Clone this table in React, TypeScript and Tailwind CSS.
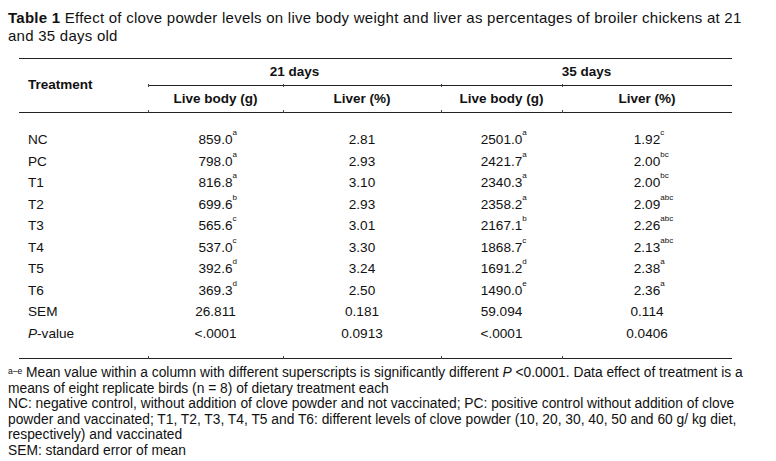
import React from "react";

type Row = { t: React.ReactNode; a: string; as?: string; b: string; c: string; cs?: string; d: string; ds?: string };

const rows: Row[] = [
  { t: "NC", a: "859.0", as: "a", b: "2.81", c: "2501.0", cs: "a", d: "1.92", ds: "c" },
  { t: "PC", a: "798.0", as: "a", b: "2.93", c: "2421.7", cs: "a", d: "2.00", ds: "bc" },
  { t: "T1", a: "816.8", as: "a", b: "3.10", c: "2340.3", cs: "a", d: "2.00", ds: "bc" },
  { t: "T2", a: "699.6", as: "b", b: "2.93", c: "2358.2", cs: "a", d: "2.09", ds: "abc" },
  { t: "T3", a: "565.6", as: "c", b: "3.01", c: "2167.1", cs: "b", d: "2.26", ds: "abc" },
  { t: "T4", a: "537.0", as: "c", b: "3.30", c: "1868.7", cs: "c", d: "2.13", ds: "abc" },
  { t: "T5", a: "392.6", as: "d", b: "3.24", c: "1691.2", cs: "d", d: "2.38", ds: "a" },
  { t: "T6", a: "369.3", as: "d", b: "2.50", c: "1490.0", cs: "e", d: "2.36", ds: "a" },
  { t: "SEM", a: "26.811", b: "0.181", c: "59.094", d: "0.114" },
  { t: <><i>P</i>-value</>, a: "<.0001", b: "0.0913", c: "<.0001", d: "0.0406" },
];

function Val({ v, s }: { v: string; s?: string }) {
  return (
    <span className="relative">
      {v}
      {s && <span className="absolute left-full top-[-3px] text-[8px] leading-none">{s}</span>}
    </span>
  );
}

// little column-border stubs where the rules meet
function Tick({ top }: { top?: boolean }) {
  return <span className={`absolute left-0 w-px h-[3px] bg-[#444] ${top ? "top-[-2px]" : "bottom-[-1px]"}`} />;
}

export default function App() {
  return (
    <div className="w-[776px] h-[461px] bg-white text-[#111] font-['Liberation_Sans',Arial,sans-serif] text-[13px] overflow-hidden">
      <div className="pl-2 pt-[9px] leading-[18px] text-[15px] tracking-[0.25px]">
        <div className="whitespace-nowrap"><b>Table 1</b> Effect of clove powder levels on live body weight and liver as percentages of broiler chickens at 21</div>
        <div className="whitespace-nowrap">and 35 days old</div>
      </div>

      <table className="ml-[19px] mt-[13px] w-[713px] table-fixed border-collapse border-t border-b border-[#222]">
        <colgroup>
          <col className="w-[129px]" />
          <col className="w-[135px]" />
          <col className="w-[158px]" />
          <col className="w-[121px]" />
          <col className="w-[170px]" />
        </colgroup>
        <thead className="font-bold text-[13.5px]">
          <tr className="h-[27px]">
            <th rowSpan={2} className="text-left pl-[9px] font-bold">Treatment</th>
            <th colSpan={2} className="text-center border-b border-[#222]">21 days</th>
            <th colSpan={2} className="text-center border-b border-[#222]">35 days</th>
          </tr>
          <tr className="h-[27px] border-b border-[#222]">
            {["Live body (g)", "Liver (%)", "Live body (g)", "Liver (%)"].map((h, i) => (
              <th key={i} className="text-center relative">
                <Tick top />
                <Tick />
                {h}
              </th>
            ))}
          </tr>
        </thead>
        <tbody className="text-[13.6px]">
          <tr className="h-[17px]"><td colSpan={5} /></tr>
          {rows.map((r, i) => (
            <tr key={i} className="h-[21.5px]">
              <td className="pl-[9px]">{r.t}</td>
              <td className="text-center"><Val v={r.a} s={r.as} /></td>
              <td className="text-center">{r.b}</td>
              <td className="text-center"><Val v={r.c} s={r.cs} /></td>
              <td className="text-center"><Val v={r.d} s={r.ds} /></td>
            </tr>
          ))}
          <tr className="h-[14px]">
            <td />
            <td className="relative"><Tick /></td>
            <td className="relative"><Tick /></td>
            <td className="relative"><Tick /></td>
            <td className="relative"><Tick /></td>
          </tr>
        </tbody>
      </table>

      <div className="pl-2 pt-[6px] leading-[15.6px] text-[13.8px]">
        <div className="whitespace-nowrap">
          <span className="text-[8.5px] align-top relative top-[-1px]">a–e</span> Mean value within a column with different superscripts is significantly different <i>P</i> &lt;0.0001. Data effect of treatment is a
        </div>
        <div className="whitespace-nowrap">means of eight replicate birds (n = 8) of dietary treatment each</div>
        <div className="whitespace-nowrap">NC: negative control, without addition of clove powder and not vaccinated; PC: positive control without addition of clove</div>
        <div className="whitespace-nowrap">powder and vaccinated; T1, T2, T3, T4, T5 and T6: different levels of clove powder (10, 20, 30, 40, 50 and 60 g/ kg diet,</div>
        <div className="whitespace-nowrap">respectively) and vaccinated</div>
        <div className="whitespace-nowrap">SEM: standard error of mean</div>
      </div>
    </div>
  );
}
